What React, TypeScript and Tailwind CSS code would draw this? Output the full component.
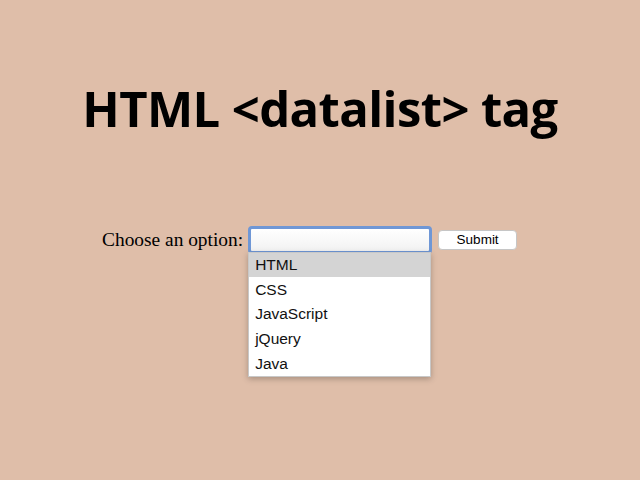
export default function App() {
  const options = ["HTML", "CSS", "JavaScript", "jQuery", "Java"]
  return (
    <div className="w-[640px] h-[480px] bg-[#dfbea9] overflow-hidden">
      <h1 className="pt-[78px] text-center text-[49px] leading-[60px] font-bold tracking-[-0.6px] text-black [font-family:'Open_Sans',sans-serif]">
        HTML &lt;datalist&gt; tag
      </h1>
      <div className="mt-[87px] pl-[102px] flex items-center">
        <label className="text-[19.4px] text-black [font-family:'Liberation_Serif',serif] mr-[5px]">
          Choose an option:
        </label>
        <div className="relative">
          <div className="w-[184px] h-[28px] rounded-[4px] border-[3px] border-[#6f97d6] bg-white bg-gradient-to-b from-white to-[#f2f2f2]" />
          <ul className="absolute left-0 top-[26px] w-[183px] bg-white shadow-[0_2px_6px_rgba(0,0,0,0.25)] border border-[#c8c8c8] text-[15.5px] text-[#111] [font-family:'Liberation_Sans',sans-serif]">
            {options.map((o, i) => (
              <li
                key={o}
                className={`h-[24.6px] flex items-center pl-[6px] ${i === 0 ? "bg-[#d4d4d4]" : ""}`}>
                {o}
              </li>
            ))}
          </ul>
        </div>
        <button className="ml-[6px] w-[79px] h-[20px] rounded-[4px] bg-white border border-[#c6c6c6] text-[13.5px] text-black [font-family:'Liberation_Sans',sans-serif] leading-none">
          Submit
        </button>
      </div>
    </div>
  )
}
